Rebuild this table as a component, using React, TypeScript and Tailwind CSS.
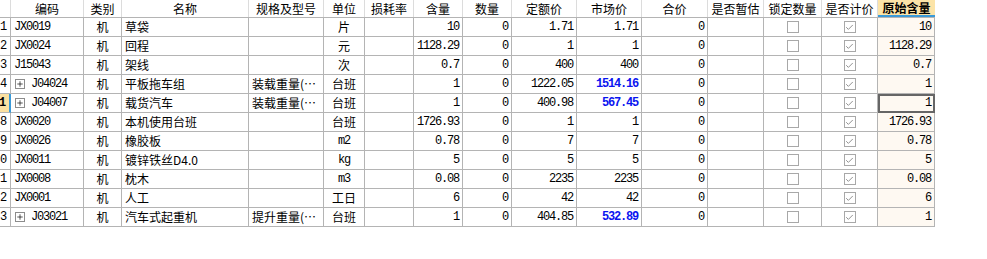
import { Check, Plus } from 'lucide-react'

const cols = [
  { key: 'no', title: '', w: 'w-[11px]' },
  { key: 'code', title: '编码', w: 'w-[73px]' },
  { key: 'type', title: '类别', w: 'w-[38px]' },
  { key: 'name', title: '名称', w: 'w-[127px]' },
  { key: 'spec', title: '规格及型号', w: 'w-[75px]' },
  { key: 'unit', title: '单位', w: 'w-[41px]' },
  { key: 'loss', title: '损耗率', w: 'w-[49px]' },
  { key: 'qty', title: '含量', w: 'w-[49px]' },
  { key: 'num', title: '数量', w: 'w-[49px]' },
  { key: 'quota', title: '定额价', w: 'w-[65px]' },
  { key: 'market', title: '市场价', w: 'w-[65px]' },
  { key: 'total', title: '合价', w: 'w-[66px]' },
  { key: 'est', title: '是否暂估', w: 'w-[56px]' },
  { key: 'lock', title: '锁定数量', w: 'w-[58px]' },
  { key: 'price', title: '是否计价', w: 'w-[56px]' },
  { key: 'orig', title: '原始含量', w: 'w-[57px]' },
]

type Row = {
  no: string
  code: string
  tree?: boolean
  name: string
  spec?: string
  unit: string
  mono?: boolean
  qty: string
  quota: string
  market: string
  blue?: boolean
}

const rows: Row[] = [
  { no: '1', code: 'JX0019', name: '草袋', unit: '片', qty: '10', quota: '1.71', market: '1.71' },
  { no: '2', code: 'JX0024', name: '回程', unit: '元', qty: '1128.29', quota: '1', market: '1' },
  { no: '3', code: 'J15043', name: '架线', unit: '次', qty: '0.7', quota: '400', market: '400' },
  { no: '4', code: 'J04024', tree: true, name: '平板拖车组', spec: '装载重量(…', unit: '台班', qty: '1', quota: '1222.05', market: '1514.16', blue: true },
  { no: '1', code: 'J04007', tree: true, name: '载货汽车', spec: '装载重量(…', unit: '台班', qty: '1', quota: '400.98', market: '567.45', blue: true },
  { no: '8', code: 'JX0020', name: '本机使用台班', unit: '台班', qty: '1726.93', quota: '1', market: '1' },
  { no: '9', code: 'JX0026', name: '橡胶板', unit: 'm2', mono: true, qty: '0.78', quota: '7', market: '7' },
  { no: '0', code: 'JX0011', name: '镀锌铁丝D4.0', unit: 'kg', mono: true, qty: '5', quota: '5', market: '5' },
  { no: '1', code: 'JX0008', name: '枕木', unit: 'm3', mono: true, qty: '0.08', quota: '2235', market: '2235' },
  { no: '2', code: 'JX0001', name: '人工', unit: '工日', qty: '6', quota: '42', market: '42' },
  { no: '3', code: 'J03021', tree: true, name: '汽车式起重机', spec: '提升重量(…', unit: '台班', qty: '1', quota: '404.85', market: '532.89', blue: true },
]

const cjk = "font-['Noto_Sans_CJK_SC',sans-serif]"
const mono = "font-['Liberation_Mono','Noto_Sans_CJK_SC',monospace] tracking-[-1.2px]"
const cell = 'shrink-0 h-full border-r border-b border-[#b4b4b4] flex items-center overflow-hidden whitespace-nowrap'
const num = `${cell} ${mono} justify-end pr-[3px]`

function Box({ checked }: { checked?: boolean }) {
  return (
    <div className="w-[12px] h-[12px] border border-[#a8a8a8] bg-white flex items-center justify-center">
      {checked && <Check className="w-[9px] h-[9px] text-[#8a8a8a]" strokeWidth={2.5} />}
    </div>
  )
}

export default function App() {
  return (
    <div className="w-[987px] h-[259px] bg-white text-[12px] text-black overflow-hidden">
      <div className="flex h-[18px] border-b border-[#b4b4b4] w-[935px]">
        {cols.map((c) =>
          c.key === 'orig' ? (
            <div key={c.key} className={`${c.w} shrink-0 h-full bg-[#fce4a8] border-b-2 border-[#3a9ad9] flex items-center justify-center font-bold ${cjk} text-[12px]`}>
              {c.title}
            </div>
          ) : (
            <div key={c.key} className={`${c.w} shrink-0 h-full border-r border-[#dcdcdc] flex items-center justify-center ${cjk} text-[12px]`}>
              {c.title}
            </div>
          )
        )}
      </div>
      {rows.map((r, i) => {
        const cur = i === 4
        return (
          <div key={i} className="flex h-[19px] w-[935px]">
            <div className={`${cell} w-[11px] justify-end pr-[4px] ${mono} ${cur ? 'bg-[#fbe0a0] font-bold border-r-2 border-r-[#3a9ad9]' : ''}`}>{r.no}</div>
            <div className={`${cell} w-[73px] pl-[3px] ${mono}`}>
              {r.tree && (
                <div className="w-[10px] h-[10px] border border-[#8c8c8c] flex items-center justify-center mr-[6px] ml-[1px] shrink-0">
                  <Plus className="w-[8px] h-[8px] text-black" strokeWidth={2} />
                </div>
              )}
              {r.code}
            </div>
            <div className={`${cell} w-[38px] justify-center ${cjk}`}>机</div>
            <div className={`${cell} w-[127px] pl-[3px] ${cjk}`}>{r.name}</div>
            <div className={`${cell} w-[75px] pl-[3px] ${cjk}`}>{r.spec}</div>
            <div className={`${cell} w-[41px] justify-center ${r.mono ? mono : cjk}`}>{r.unit}</div>
            <div className={`${cell} w-[49px]`} />
            <div className={`${num} w-[49px]`}>{r.qty}</div>
            <div className={`${num} w-[49px]`}>0</div>
            <div className={`${num} w-[65px]`}>{r.quota}</div>
            <div className={`${num} w-[65px] ${r.blue ? 'text-[#0a14f0] font-bold tracking-[-0.6px]' : ''}`}>{r.market}</div>
            <div className={`${num} w-[66px]`}>0</div>
            <div className={`${cell} w-[56px]`} />
            <div className={`${cell} w-[58px] justify-center`}>
              <Box />
            </div>
            <div className={`${cell} w-[56px] justify-center`}>
              <Box checked />
            </div>
            <div className={`${num} w-[57px] bg-[#fef9f2] ${cur ? 'outline-2 -outline-offset-2 outline-[#666666]' : ''}`}>{r.qty}</div>
          </div>
        )
      })}
    </div>
  )
}
